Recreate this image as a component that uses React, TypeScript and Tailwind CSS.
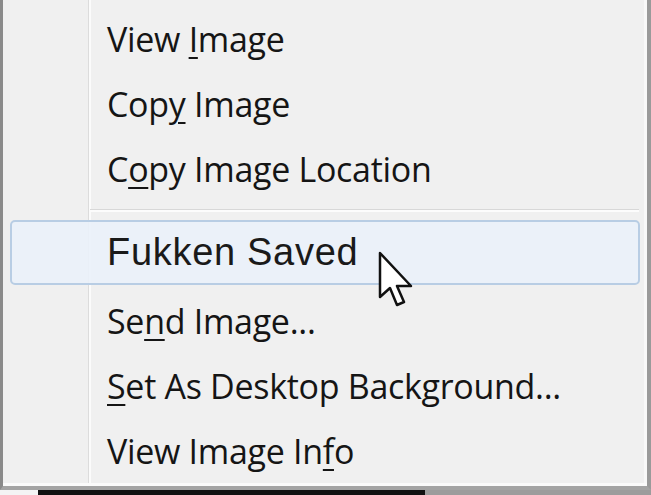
const Key = ({ children }: { children: string }) => (
  <span className="underline decoration-[2px] underline-offset-[5px]">{children}</span>
);

const Item = ({ children }: { children: React.ReactNode }) => (
  <div className="h-[65px] flex items-center pl-[104px] text-[34px] tracking-[-0.3px] text-[#151515] [font-family:'Open_Sans',sans-serif]">
    <span className="-mt-[2px]">{children}</span>
  </div>
);

const Cursor = () => (
  <svg className="absolute left-[374px] top-[251px]" width="40" height="60" viewBox="0 0 40 60">
    <path
      d="M3 2 L3 46 L13 37 L20 54 L27 51 L20 35 L34 35 Z"
      fill="#ffffff"
      stroke="#111111"
      strokeWidth="2.5"
      strokeLinejoin="round"
    />
  </svg>
);

export default function App() {
  return (
    <div className="w-[651px] h-[495px] flex flex-col bg-[#f0f0f0] overflow-hidden">
      <div className="relative flex-1 flex flex-col border-l-[3px] border-l-[#8a8a8a] border-r-[4px] border-r-[#9a9a9a] border-b-[4px] border-b-[#a4a4a4]">
        <div className="absolute left-[85px] top-0 bottom-0 w-[3px] border-l border-l-[#dcdcdc] border-r-2 border-r-[#fbfbfb]" />
        <div className="absolute right-0 top-0 bottom-0 w-[3px] bg-[#f8f8f8]" />
        <div className="absolute left-0 right-0 bottom-0 h-[3px] bg-[#fbfbfb]" />
        <div className="relative flex flex-col pt-[8px]">
          <Item>
            View <Key>I</Key>mage
          </Item>
          <Item>
            Cop<Key>y</Key> Image
          </Item>
          <Item>
            C<Key>o</Key>py Image Location
          </Item>
          <div className="h-[15px] flex items-center pl-[87px] pr-[8px]">
            <div className="flex-1 h-[3px] border-t border-t-[#d8d8d8] border-b-2 border-b-[#fcfcfc]" />
          </div>
          <div className="h-[72px] pl-[7px] pr-[7px] pt-[2px] pb-[5px]">
            <div className="h-full rounded-[5px] border-2 border-[#b8cde4] bg-[#eaf1fa]/90 flex items-center pl-[95px]">
              <span className="text-[38px] tracking-[0.7px] text-[#1a1a1a] [font-family:'Liberation_Sans',Arial,sans-serif]">
                Fukken Saved
              </span>
            </div>
          </div>
          <Item>
            Se<Key>n</Key>d Image...
          </Item>
          <Item>
            <Key>S</Key>et As Desktop Background...
          </Item>
          <Item>
            View Image In<Key>f</Key>o
          </Item>
        </div>
        <Cursor />
      </div>
      <div className="h-[5px] flex">
        <div className="w-[38px] bg-[#f4f4f4]" />
        <div className="w-[387px] bg-[#111111]" />
        <div className="flex-1 bg-[#9c9c9c]" />
      </div>
    </div>
  );
}
